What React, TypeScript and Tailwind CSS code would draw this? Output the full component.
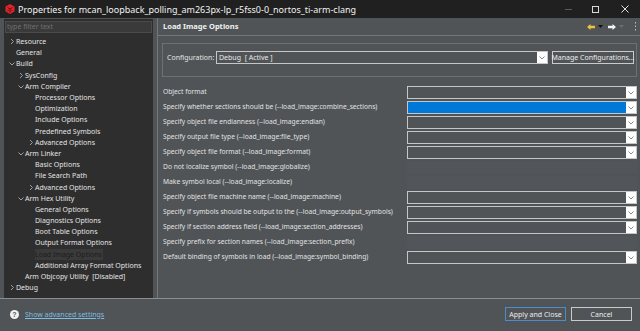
const font = { fontFamily: '"Noto Sans", "Open Sans", sans-serif' }

type Node = { level: 0 | 1 | 2; text: string; chevron?: 'right' | 'down'; selected?: boolean }

const tree: Node[] = [
  { level: 0, text: 'Resource', chevron: 'right' },
  { level: 0, text: 'General' },
  { level: 0, text: 'Build', chevron: 'down' },
  { level: 1, text: 'SysConfig', chevron: 'right' },
  { level: 1, text: 'Arm Compiler', chevron: 'down' },
  { level: 2, text: 'Processor Options' },
  { level: 2, text: 'Optimization' },
  { level: 2, text: 'Include Options' },
  { level: 2, text: 'Predefined Symbols' },
  { level: 2, text: 'Advanced Options', chevron: 'right' },
  { level: 1, text: 'Arm Linker', chevron: 'down' },
  { level: 2, text: 'Basic Options' },
  { level: 2, text: 'File Search Path' },
  { level: 2, text: 'Advanced Options', chevron: 'right' },
  { level: 1, text: 'Arm Hex Utility', chevron: 'down' },
  { level: 2, text: 'General Options' },
  { level: 2, text: 'Diagnostics Options' },
  { level: 2, text: 'Boot Table Options' },
  { level: 2, text: 'Output Format Options' },
  { level: 2, text: 'Load Image Options', selected: true },
  { level: 2, text: 'Additional Array Format Options' },
  { level: 1, text: 'Arm Objcopy Utility  [Disabled]' },
  { level: 0, text: 'Debug', chevron: 'right' },
]

type Opt = { label: string; kind: 'combo' | 'blue' | 'none' }

const options: Opt[] = [
  { label: 'Object format', kind: 'combo' },
  { label: 'Specify whether sections should be (--load_image:combine_sections)', kind: 'blue' },
  { label: 'Specify object file endianness (--load_image:endian)', kind: 'combo' },
  { label: 'Specify output file type (--load_image:file_type)', kind: 'combo' },
  { label: 'Specify object file format (--load_image:format)', kind: 'combo' },
  { label: 'Do not localize symbol (--load_image:globalize)', kind: 'none' },
  { label: 'Make symbol local (--load_image:localize)', kind: 'none' },
  { label: 'Specify object file machine name (--load_image:machine)', kind: 'combo' },
  { label: 'Specify if symbols should be output to the (--load_image:output_symbols)', kind: 'combo' },
  { label: 'Specify if section address field (--load_image:section_addresses)', kind: 'combo' },
  { label: 'Specify prefix for section names (--load_image:section_prefix)', kind: 'none' },
  { label: 'Default binding of symbols in load (--load_image:symbol_binding)', kind: 'combo' },
]

function Chevron({ dir }: { dir: 'right' | 'down' }) {
  return dir === 'right' ? (
    <svg width="8" height="11" viewBox="0 0 8 11">
      <path d="M3 3 L5.5 5.5 L3 8" fill="none" stroke="#a0a0a0" strokeWidth="1" />
    </svg>
  ) : (
    <svg width="8" height="11" viewBox="0 0 8 11">
      <path d="M1.5 4.5 L4 7 L6.5 4.5" fill="none" stroke="#a0a0a0" strokeWidth="1" />
    </svg>
  )
}

function DropArrow() {
  return (
    <div className="flex h-full w-[10px] items-center justify-center bg-white">
      <svg width="6" height="4" viewBox="0 0 6 4">
        <path d="M0.5 0.5 L3 3 L5.5 0.5" fill="none" stroke="#8a8a8a" strokeWidth="1" />
      </svg>
    </div>
  )
}

function Combo({ blue }: { blue?: boolean }) {
  return (
    <div className={`flex h-[13px] w-[230px] shrink-0 border border-[#c4c6c8] ${blue ? 'bg-[#0078d7]' : 'bg-[#505457]'}`}>
      <div className="flex-1" />
      <DropArrow />
    </div>
  )
}

function TreeRow({ node }: { node: Node }) {
  const indent = node.level === 0 ? 'w-[4px]' : node.level === 1 ? 'w-[13px]' : 'w-[23px]'
  return (
    <div className="flex h-[11.2px] items-center">
      <div className={`${indent} shrink-0`} />
      <div className="flex w-[8px] shrink-0 items-center">{node.chevron && <Chevron dir={node.chevron} />}</div>
      <span
        className={`whitespace-pre leading-[11px] ${
          node.selected ? 'bg-[#3a3a3a] pr-[1px] text-[#1c1c1c]' : 'text-[#e4e4e4]'
        }`}
      >
        {node.text}
      </span>
    </div>
  )
}

export default function App() {
  return (
    <div className="flex h-[331px] w-[640px] flex-col overflow-hidden bg-[#505457] text-[7px]" style={font}>
      {/* title bar */}
      <div className="flex h-[18px] items-center bg-[#202020] pl-[5px] text-[9px]">
        <svg width="10" height="10" viewBox="0 0 10 10">
          <polygon points="5,0 9.5,2.5 9.5,7.5 5,10 0.5,7.5 0.5,2.5" fill="#e0242b" />
          <path d="M2.5 3.5 L5 5 L7.5 3.5 M5 5 L5 8.5 M3 6 L3 7 M7 6 L7 7" stroke="#5a0b0e" strokeWidth="0.9" fill="none" />
        </svg>
        <span className="ml-[3px] text-[#f2f2f2] leading-none">
          Properties for mcan_loopback_polling_am263px-lp_r5fss0-0_nortos_ti-arm-clang
        </span>
        <div className="flex-1" />
        <div className="mr-[20px] h-[1px] w-[7px] bg-[#5a5a5a]" />
        <div className="mr-[22px] h-[7px] w-[7px] border border-[#d8d8d8]" />
        <svg width="8" height="8" viewBox="0 0 8 8" className="mr-[11px]">
          <path d="M0.5 0.5 L7.5 7.5 M7.5 0.5 L0.5 7.5" stroke="#e0e0e0" strokeWidth="1" />
        </svg>
      </div>

      {/* main */}
      <div className="flex h-[280px]">
        {/* tree */}
        <div className="ml-[4px] mt-[1px] flex h-[279px] w-[149px] shrink-0 flex-col bg-[#2e2e2e]">
          <div className="mx-[1px] mt-[2px] flex h-[12px] items-center border border-[#4b4b4b] bg-[#3a3a3a] pl-[1px] text-[#707070]">
            type filter text
          </div>
          <div className="mt-[3px] flex flex-col">
            {tree.map((n, i) => (
              <TreeRow key={i} node={n} />
            ))}
          </div>
        </div>

        {/* right side */}
        <div className="ml-[4px] flex flex-1 flex-col border-l border-[#73777a]">
          <div className="flex h-[18px] items-center border-b border-[#73777a] pl-[5px]">
            <span className="text-[7.5px] font-bold text-[#f0f0f0]">Load Image Options</span>
            <div className="flex-1" />
            <div className="mr-[3px] flex items-center gap-[3px]">
              <svg width="8" height="6" viewBox="0 0 8 6">
                <polygon points="0,3 3.5,0 3.5,1.8 8,1.8 8,4.2 3.5,4.2 3.5,6" fill="#f0c040" />
              </svg>
              <svg width="5" height="3" viewBox="0 0 5 3">
                <polygon points="0,0 5,0 2.5,3" fill="#111" />
              </svg>
              <svg width="8" height="6" viewBox="0 0 8 6" className="ml-[2px]">
                <polygon points="8,3 4.5,0 4.5,1.8 0,1.8 0,4.2 4.5,4.2 4.5,6" fill="#f4f4f4" />
              </svg>
              <svg width="5" height="3" viewBox="0 0 5 3">
                <polygon points="0,0 5,0 2.5,3" fill="#6a6d70" />
              </svg>
              <svg width="3" height="9" viewBox="0 0 3 9" className="ml-[7px]">
                <rect x="1" y="0" width="1" height="1.5" fill="#c0c0c0" />
                <rect x="1" y="3.5" width="1" height="1.5" fill="#c0c0c0" />
                <rect x="1" y="7" width="1" height="1.5" fill="#c0c0c0" />
              </svg>
            </div>
          </div>

          {/* configuration group */}
          <div className="ml-[4px] mr-[3px] mt-[7px] flex h-[34px] items-start border border-[#6c7073] pl-[4px] pt-[7px]">
            <span className="mt-[1px] w-[49px] shrink-0 whitespace-nowrap text-[#e4e4e4] leading-[11px]">Configuration:</span>
            <div className="flex h-[13px] w-[332px] shrink-0 border border-[#c4c6c8] bg-[#505457]">
              <span className="flex-1 pl-[2px] text-[#e8e8e8] leading-[11px]">Debug&nbsp; [ Active ]</span>
              <DropArrow />
            </div>
            <div className="ml-[4px] flex h-[13px] w-[82px] shrink-0 items-center justify-center whitespace-nowrap border border-[#c8cacc] text-[#ececec] leading-none">
              Manage Configurations...
            </div>
          </div>

          {/* options */}
          <div className="mt-[8px] flex flex-col pl-[5px]">
            {options.map((o, i) => (
              <div key={i} className="flex h-[15px] items-center">
                <span className="w-[244px] shrink-0 whitespace-nowrap text-[6.7px] text-[#e2e2e2] leading-none">{o.label}</span>
                {o.kind === 'none' ? (
                  <div className="h-[13px] w-[230px] shrink-0 bg-[#52565a]" />
                ) : (
                  <Combo blue={o.kind === 'blue'} />
                )}
              </div>
            ))}
          </div>
        </div>
      </div>

      {/* footer */}
      <div className="h-[1px] bg-[#8b8e90]" />
      <div className="flex flex-1 items-center pb-[2px] pl-[10px] pr-[8px]">
        <svg width="9" height="9" viewBox="0 0 9 9">
          <circle cx="4.5" cy="4.5" r="4.5" fill="#f2f2f2" />
          <text x="4.5" y="7.3" textAnchor="middle" fontSize="7" fontWeight="bold" fill="#505457" fontFamily="Liberation Sans, sans-serif">
            ?
          </text>
        </svg>
        <span className="ml-[6px] text-[#7cbde0] underline leading-none">Show advanced settings</span>
        <div className="flex-1" />
        <div className="flex h-[14px] w-[61px] items-center justify-center whitespace-nowrap border border-[#4a8ccc] text-[#ececec] leading-none">
          Apply and Close
        </div>
        <div className="ml-[5px] flex h-[14px] w-[61px] items-center justify-center border border-[#c8cacc] text-[#ececec] leading-none">
          Cancel
        </div>
      </div>
    </div>
  )
}
